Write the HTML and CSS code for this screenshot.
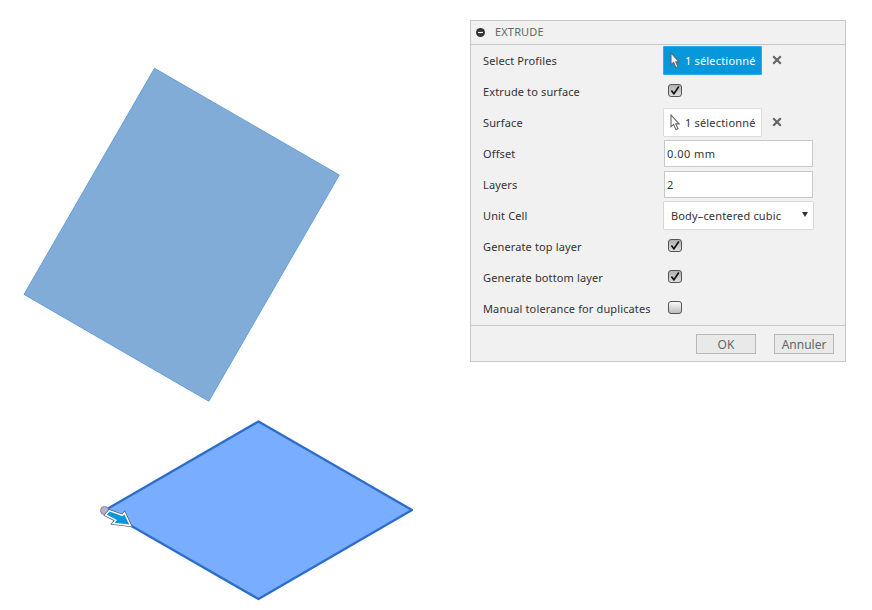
FILE: index.html
```html
<!DOCTYPE html>
<html lang="fr">
<head>
<meta charset="utf-8">
<title>Extrude</title>
<link rel="stylesheet" href="styles.css">
</head>
<body>
<svg class="defs" width="0" height="0" aria-hidden="true">
  <symbol id="pointer" viewBox="0 0 10 17"><path d="M1 1v11.8l2.6-2.4 2.3 5.2 2.1-.9-2.2-4.8h3.3z"/></symbol>
  <symbol id="cross" viewBox="0 0 10 10"><path d="M1.2 1.2l7.6 7.6M8.8 1.2l-7.6 7.6"/></symbol>
  <symbol id="check" viewBox="0 0 14 13"><path d="M3.4 6.6l2.5 3.2 4.9-7.3"/></symbol>
</svg>
<main class="workspace">
  <svg class="viewport" width="470" height="610" viewBox="0 0 470 610">
    <polygon class="surface" points="154.5,68.3 339.3,175 208.8,401.2 24,294.4"/>
    <polygon class="profile" points="104.5,510.5 258.5,421.5 412,510 258.5,599"/>
    <circle class="origin" cx="104.5" cy="510.5" r="4"/>
    <path class="arrow-edge" d="M109.6 511.6L122.6 516.2 124.3 514.2 129.2 524.6 114.6 522.8 117 520 106.8 514.8z"/>
    <path class="arrow" d="M109.6 511.6L122.6 516.2 124.3 514.2 129.2 524.6 114.6 522.8 117 520 106.8 514.8z"/>
  </svg>
  <section class="panel">
    <header class="title"><svg width="9" height="9" viewBox="0 0 9 9"><circle cx="4.5" cy="4.5" r="4.5" fill="#333"/><path d="M2 4.5h5" stroke="#fff" stroke-width="1.2"/></svg><span class="title-text">EXTRUDE</span></header>
    <div class="rows">
      <div class="row"><span class="label">Select Profiles</span><span class="pick active"><svg class="pointer"><use href="#pointer"/></svg><span>1 sélectionné</span></span><svg class="cross"><use href="#cross"/></svg></div>
      <div class="row"><span class="label">Extrude to surface</span><span class="box on"><svg><use href="#check"/></svg></span></div>
      <div class="row"><span class="label">Surface</span><span class="pick"><svg class="pointer"><use href="#pointer"/></svg><span>1 sélectionné</span></span><svg class="cross"><use href="#cross"/></svg></div>
      <div class="row"><span class="label">Offset</span><span class="field">0.00 mm</span></div>
      <div class="row"><span class="label">Layers</span><span class="field">2</span></div>
      <div class="row"><span class="label">Unit Cell</span><span class="select"><span>Body–centered cubic</span><svg width="6" height="5" viewBox="0 0 6 5"><path d="M0 0h6L3 5z" fill="#333"/></svg></span></div>
      <div class="row"><span class="label">Generate top layer</span><span class="box on"><svg><use href="#check"/></svg></span></div>
      <div class="row"><span class="label">Generate bottom layer</span><span class="box on"><svg><use href="#check"/></svg></span></div>
      <div class="row"><span class="label">Manual tolerance for duplicates</span><span class="box"></span></div>
    </div>
    <footer class="actions"><span class="button">OK</span><span class="button">Annuler</span></footer>
  </section>
</main>
</body>
</html>
```
FILE: styles.css
```css
* { box-sizing: border-box; }
body { margin: 0; background: #fff; font: 11px/16px "Noto Sans", sans-serif; color: #333; overflow: hidden; }
.defs { display: block; }
.workspace { display: flex; align-items: flex-start; height: 610px; }
.viewport { flex: none; }
.surface { fill: #81acd8; stroke: #669fd9; stroke-width: 1; }
.profile { fill: #78adff; stroke: #2d6dca; stroke-width: 2.3; stroke-linejoin: round; }
.origin { fill: #b4b0cf; stroke: #89869f; stroke-width: 1; }
.arrow-edge { fill: none; stroke: #4a5a68; stroke-width: 4.4; }
.arrow { fill: #0997dc; stroke: #fff; stroke-width: 3; paint-order: stroke; }
.panel { width: 376px; height: 342px; margin-top: 20px; border: 1px solid #c8c8c8; background: #f1f1f1; white-space: nowrap; }
.title { display: flex; align-items: center; gap: 10px; height: 24px; padding: 0 0 1px 5px; border-bottom: 1px solid #c8c8c8; color: #666; }
.title-text { letter-spacing: .15px; }
.rows { height: 280px; }
.row { display: flex; align-items: center; height: 31px; padding-left: 12px; }
.label { width: 180px; flex: none; letter-spacing: .13px; }
.pick { display: flex; align-items: center; gap: 5px; width: 99px; height: 29px; padding-left: 6px; border: 1px solid #ddd; border-radius: 1px; background: #fff; letter-spacing: .18px; }
.pick.active { background: #0797db; border-color: #2bace8; color: #fff; }
.pointer { width: 10px; height: 17px; margin-top: -1px; fill: #fff; stroke: #666; stroke-width: 1.1; }
.active .pointer { fill: #f4f4f4; }
.cross { width: 10px; height: 10px; margin: -2px 0 0 10px; stroke: #666; stroke-width: 2.2; }
.field { width: 149px; height: 27px; margin-left: 1px; padding: 5px 2px; border: 1px solid #c8c8c8; background: #fff; letter-spacing: .45px; }
.select { display: flex; align-items: center; justify-content: space-between; width: 151px; height: 29px; padding: 0 5px 0 7px; border: 1px solid #d8d8d8; border-radius: 1px; background: #fff; letter-spacing: .15px; }
.select svg { margin-top: -2px; }
.box { display: flex; width: 14px; height: 13px; margin: -2px 0 0 5px; border: 1px solid #555; border-radius: 3px; background: linear-gradient(#fafafa, #bcbcbc); }
.box.on { background: linear-gradient(#b0b0b0, #dedede); }
.box svg { flex: none; width: 14px; height: 13px; margin: -1px; fill: none; stroke: #111; stroke-width: 1.6; }
.actions { display: flex; justify-content: flex-end; align-items: center; gap: 18px; height: 36px; padding: 0 11px 0 0; border-top: 1px solid #c8c8c8; font-size: 12px; color: #666; }
.button { width: 60px; height: 20px; border: 1px solid #b8b8b8; background: #e9e9e9; text-align: center; line-height: 19px; }
```
